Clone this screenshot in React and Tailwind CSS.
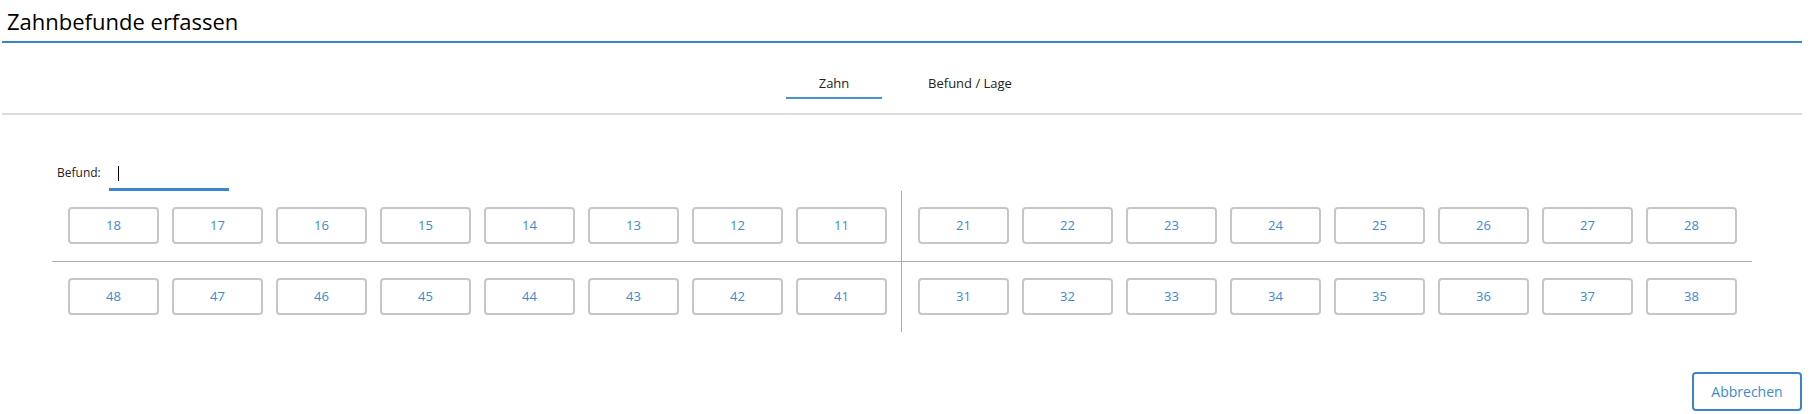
import React, { useState } from 'react';

const upperLeft = [18, 17, 16, 15, 14, 13, 12, 11];
const upperRight = [21, 22, 23, 24, 25, 26, 27, 28];
const lowerLeft = [48, 47, 46, 45, 44, 43, 42, 41];
const lowerRight = [31, 32, 33, 34, 35, 36, 37, 38];

const ToothButton = ({ nr, onPick }) => (
  <button
    type="button"
    onClick={() => onPick(nr)}
    className="w-[91px] h-[37px] border-2 border-[#c6c6c6] rounded-[4px] bg-white text-[13px] text-[#3d89d2] flex items-center justify-center"
  >
    {nr}
  </button>
);

const Quadrant = ({ teeth, className, onPick }) => (
  <div className={`pl-[16px] pt-[16px] pb-[17px] flex gap-[13px] ${className}`}>
    {teeth.map((nr) => (
      <ToothButton key={nr} nr={nr} onPick={onPick} />
    ))}
  </div>
);

const App = () => {
  const [tab, setTab] = useState('zahn');
  const [befund, setBefund] = useState('');

  return (
    <div className="w-full h-[414px] bg-white font-['Open_Sans',sans-serif] text-[#1a1a1a]">
      <div className="ml-[2px] w-[1800px]">
        {/* header */}
        <div className="h-[43px] border-b-2 border-[#3a85c8] pl-[5px] pt-[6px]">
          <h1 className="text-[22px] leading-[30px] font-normal text-black">Zahnbefunde erfassen</h1>
        </div>

        {/* tabs */}
        <div className="h-[72px] border-b-2 border-[#dcdcdc] flex justify-center gap-[40px] pt-[29px]">
          <button type="button" onClick={() => setTab('zahn')} className="w-[96px] flex flex-col items-center">
            <span className="h-[22px] leading-[22px] text-[13px] text-[#222]">Zahn</span>
            <span className={`mt-[3px] h-[2px] w-full ${tab === 'zahn' ? 'bg-[#4a90d2]' : 'bg-transparent'}`} />
          </button>
          <button type="button" onClick={() => setTab('lage')} className="w-[96px] flex flex-col items-center">
            <span className="h-[22px] leading-[22px] text-[13px] text-[#222]">Befund / Lage</span>
            <span className={`mt-[3px] h-[2px] w-full ${tab === 'lage' ? 'bg-[#4a90d2]' : 'bg-transparent'}`} />
          </button>
        </div>

        {/* befund input */}
        <div className="mt-[46px] ml-[55px] flex items-start h-[30px]">
          <label className="w-[52px] text-[12px] leading-[24px] text-[#222]">Befund:</label>
          <div className="w-[120px] h-[30px] border-b-[3px] border-[#3a85c8] pl-[9px] pt-[5px] flex items-start">
            {befund ? (
              <span className="text-[13px] leading-[15px]">{befund}</span>
            ) : null}
            <span className="w-px h-[15px] bg-black" />
          </div>
        </div>

        {/* tooth cross */}
        <div className="ml-[50px] w-[1700px] grid grid-cols-[850px_850px]">
          <Quadrant teeth={upperLeft} className="border-r border-b border-[#ababab]" onPick={setBefund} />
          <Quadrant teeth={upperRight} className="border-b border-[#ababab]" onPick={setBefund} />
          <Quadrant teeth={lowerLeft} className="border-r border-[#ababab]" onPick={setBefund} />
          <Quadrant teeth={lowerRight} className="" onPick={setBefund} />
        </div>

        {/* footer */}
        <div className="mt-[40px] flex justify-end">
          <button
            type="button"
            onClick={() => setBefund('')}
            className="w-[110px] h-[39px] border-2 border-[#3a85c8] rounded-[4px] text-[14px] text-[#3d89d2]"
          >
            Abbrechen
          </button>
        </div>
      </div>
    </div>
  );
};

export default App;
